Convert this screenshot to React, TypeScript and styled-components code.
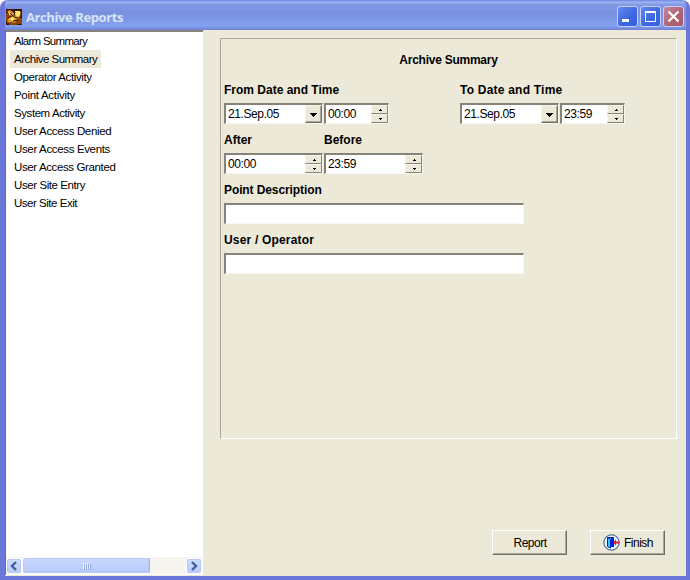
import React from "react";
import styled, { createGlobalStyle } from "styled-components";

const GlobalStyle = createGlobalStyle`
  * { box-sizing: border-box; }
  body { margin: 0; overflow: hidden; background: #fff; }
  input, button { font: inherit; color: inherit; }
`;

const Window = styled.div`
  width: 690px;
  height: 580px;
  display: flex;
  flex-direction: column;
  background: #ece9d8;
  border: solid #6b78d9;
  border-width: 0 4px 4px 5px;
  border-radius: 8px 8px 0 0;
  overflow: hidden;
  font: 12px/18px "Liberation Sans", Arial, sans-serif;
  color: #000;
`;

const TitleBar = styled.header`
  height: 30px;
  flex: none;
  margin: 0 -4px 0 -5px;
  padding: 3px 6px 0 6px;
  display: flex;
  align-items: center;
  gap: 4px;
  background: linear-gradient(#6d83dc 0, #9db2f3 2px, #8097e4 5px, #7891df 13px, #7d98e7 20px, #83a1f0 26px, #7890e0 28px, #6f80d1 30px);
`;

const Title = styled.h1`
  margin: 0;
  flex: 1;
  font: bold 13px/20px "Open Sans", "Noto Sans", sans-serif;
  letter-spacing: -0.4px;
  color: #d8e4f8;
`;

const WindowControls = styled.div`
  display: flex;
  gap: 2px;
`;

const ControlButton = styled.button<{ $close?: boolean }>`
  width: 21px;
  height: 21px;
  padding: 0;
  border: 1px solid #c4d0fa;
  border-radius: 3px;
  background: ${(p) =>
    p.$close
      ? "linear-gradient(135deg, #c28a9e, #b0606f 60%, #a9596b)"
      : "linear-gradient(135deg, #6587ee, #3c66e0 60%, #3a64de)"};
  svg { display: block; }
`;

const Body = styled.main`
  flex: 1;
  display: flex;
  min-height: 0;
`;

const Sidebar = styled.nav`
  width: 198px;
  height: 545px;
  display: flex;
  flex-direction: column;
  background: #fff;
  border: solid #716f64;
  border-width: 2px 0 0 1px;
  border-top-color: #85837a;
`;

const ReportList = styled.ul`
  list-style: none;
  margin: 0;
  padding: 0 0 0 4px;
  flex: 1;
`;

const ReportItem = styled.li<{ $selected?: boolean; $spacing: number }>`
  width: max-content;
  height: 18px;
  padding: 0 4px;
  font-size: 11.5px;
  letter-spacing: ${(p) => p.$spacing}px;
  background: ${(p) => (p.$selected ? "#ece9d8" : "transparent")};
`;

const ScrollBar = styled.div`
  height: 17px;
  display: flex;
  align-items: center;
  background: #f4f3ee;
  margin: 0 1px 1px 0;
`;

const ScrollArrow = styled.button`
  width: 16px;
  height: 16px;
  padding: 0;
  border: 1px solid #fff;
  border-radius: 3px;
  background: linear-gradient(#d0dcff, #b9cafb);
  box-shadow: inset 0 0 0 1px #b6c7f3;
  svg { display: block; }
`;

const ScrollTrack = styled.div`
  flex: 1;
  height: 17px;
  background: #f5f4ef;
`;

const ScrollThumb = styled.div`
  width: 128px;
  height: 17px;
  display: flex;
  align-items: center;
  justify-content: center;
  gap: 1px;
  border: 1px solid #fff;
  border-right-color: #a3b6e6;
  border-radius: 3px;
  background: linear-gradient(#cbd8ff, #bdcefe 75%, #b1c4f6);
  box-shadow: inset 0 0 0 1px #b9c9f7;
`;

const Grip = styled.span`
  width: 1px;
  height: 6px;
  background: #eef3ff;
  box-shadow: 1px 1px 0 #93aae6;
`;

const Workspace = styled.section`
  width: 457px;
  margin: 8px 0 0 17px;
`;

const Panel = styled.div`
  height: 401px;
  padding: 12px 3px;
  border: 1px solid;
  border-color: #aca899 #fff #fff #aca899;
`;

const Heading = styled.h2`
  margin: 0 0 12px;
  font-size: 12px;
  line-height: 18px;
  text-align: center;
  letter-spacing: -0.25px;
`;

const FieldRow = styled.div`
  display: flex;
  height: 50px;
`;

const Field = styled.div<{ $width: number }>`
  width: ${(p) => p.$width}px;
`;

const Label = styled.label<{ $spacing?: number }>`
  display: block;
  height: 22px;
  line-height: 18px;
  font-weight: bold;
  white-space: nowrap;
  letter-spacing: ${(p) => p.$spacing ?? 0}px;
`;

const Controls = styled.div`
  display: flex;
  gap: 1px;
`;

const Sunken = styled.div<{ $width: number }>`
  width: ${(p) => p.$width}px;
  height: 21px;
  display: flex;
  background: #fff;
  border: solid;
  border-width: 2px 1px 1px 2px;
  border-color: #85837a #f8f7f2 #f8f7f2 #85837a;
`;

const Value = styled.input`
  flex: 1;
  min-width: 0;
  width: 0;
  height: 18px;
  padding: 0 0 0 2px;
  border: 0;
  outline: 0;
  background: transparent;
  letter-spacing: -0.4px;
`;

const DropButton = styled.button`
  width: 17px;
  height: 18px;
  padding: 0;
  border: 1px solid;
  border-color: #f6f4ea #716f64 #716f64 #f6f4ea;
  box-shadow: inset -1px -1px 0 #aca899;
  background: #ece9d8;
  svg { display: block; }
`;

const Spinner = styled.div`
  width: 17px;
  display: flex;
  flex-direction: column;
`;

const SpinButton = styled.button`
  height: 9px;
  padding: 0;
  border: 1px solid;
  border-color: #f6f4ea #85837a #85837a #f6f4ea;
  background: #ece9d8;
  svg { display: block; }
`;

const Actions = styled.footer`
  display: flex;
  justify-content: flex-end;
  gap: 23px;
  margin: 91px 12px 0 0;
`;

const PushButton = styled.button`
  width: 75px;
  height: 25px;
  padding: 0 0 0 1px;
  display: flex;
  align-items: center;
  justify-content: center;
  gap: 4px;
  border: 1px solid;
  border-color: #fff #716f64 #716f64 #fff;
  box-shadow: inset -1px -1px 0 #aca899;
  background: #ece9d8;
  letter-spacing: -0.5px;
`;

const reports: { name: string; spacing: number }[] = [
  { name: "Alarm Summary", spacing: -0.72 },
  { name: "Archive Summary", spacing: -0.5 },
  { name: "Operator Activity", spacing: -0.4 },
  { name: "Point Activity", spacing: -0.3 },
  { name: "System Activity", spacing: -0.43 },
  { name: "User Access Denied", spacing: -0.35 },
  { name: "User Access Events", spacing: -0.35 },
  { name: "User Access Granted", spacing: -0.38 },
  { name: "User Site Entry", spacing: -0.42 },
  { name: "User Site Exit", spacing: -0.48 },
];

const AppIcon = () => (
  <svg width="16" height="16" viewBox="0 0 16 16">
    <path fill="#3b1705" d="M0 0h16v16H0z" />
    <path fill="#8a4608" d="M0 4h4v8H0zM10 9h6v6h-6zM3 13h8v3H3z" />
    <path fill="#d99420" d="M1 2l3-1 3 2 2 3 3-4 3 1-1 5-3 2-2 4-4-1-4 1 1-4 3-3z" />
    <path fill="#ffe47a" d="M9 2h5v4l-3 2-2-3zM2 3l3 1-1 3zM3 10l4-2 2 2-3 2z" />
    <path stroke="#3b1705" fill="none" d="M4 4l4 4 4 1M2 9l4-2M9 3l-1 4M7 12l5-1" />
  </svg>
);

const Arrow = ({ left }: { left?: boolean }) => (
  <svg width="14" height="14" viewBox="0 0 14 14">
    <path d={left ? "M9 3L5 7l4 4" : "M5 3l4 4-4 4"} fill="none" stroke="#43629c" strokeWidth="2.4" />
  </svg>
);

const ExitIcon = () => (
  <svg width="17" height="17" viewBox="0 0 17 17">
    <circle cx="8.5" cy="8.5" r="7.7" fill="#e8f4ff" stroke="#244a80" />
    <path d="M5 3.5h5.5V13" fill="none" stroke="#0018a8" />
    <path d="M4.5 3.5l3 1.5v9l-3-1.5z" fill="#35c5f5" stroke="#0020c8" />
    <path d="M8 4h2v9H8z" fill="#0028e0" />
    <path d="M10 8.5l3-3v2h3v2h-3v2z" fill="#e81525" />
  </svg>
);

const TimeField = ({ value, width }: { value: string; width: number }) => (
  <Sunken $width={width}>
    <Value defaultValue={value} />
    <Spinner>
      <SpinButton aria-label="Increase">
        <svg width="15" height="7"><path d="M8 3h1v1h1v1H7V4h1z" /></svg>
      </SpinButton>
      <SpinButton aria-label="Decrease">
        <svg width="15" height="7"><path d="M7 3h3v1H9v1H8V4H7z" /></svg>
      </SpinButton>
    </Spinner>
  </Sunken>
);

const DateField = ({ value }: { value: string }) => (
  <Sunken $width={99}>
    <Value defaultValue={value} />
    <DropButton aria-label="Open calendar">
      <svg width="15" height="16"><path d="M4 7h7v1h-1v1H9v1H8v1H7v-1H6V9H5V8H4z" /></svg>
    </DropButton>
  </Sunken>
);

export default function App() {
  return (
    <>
      <GlobalStyle />
      <Window>
        <TitleBar>
          <AppIcon />
          <Title>Archive Reports</Title>
          <WindowControls>
            <ControlButton aria-label="Minimize">
              <svg width="19" height="19"><path fill="#fff" d="M4 12h7v3H4z" /></svg>
            </ControlButton>
            <ControlButton aria-label="Maximize">
              <svg width="19" height="19"><path fill="#fff" fillRule="evenodd" d="M4 4h11v11H4zM5 6v8h9V6z" /></svg>
            </ControlButton>
            <ControlButton $close aria-label="Close">
              <svg width="19" height="19"><path stroke="#fff" strokeWidth="2.2" d="M4.5 4.5l10 10M14.5 4.5l-10 10" /></svg>
            </ControlButton>
          </WindowControls>
        </TitleBar>
        <Body>
          <Sidebar>
            <ReportList>
              {reports.map((r) => (
                <ReportItem key={r.name} $selected={r.name === "Archive Summary"} $spacing={r.spacing}>
                  {r.name}
                </ReportItem>
              ))}
            </ReportList>
            <ScrollBar>
              <ScrollArrow aria-label="Scroll left"><Arrow left /></ScrollArrow>
              <ScrollTrack>
                <ScrollThumb><Grip /><Grip /><Grip /><Grip /></ScrollThumb>
              </ScrollTrack>
              <ScrollArrow aria-label="Scroll right"><Arrow /></ScrollArrow>
            </ScrollBar>
          </Sidebar>
          <Workspace>
            <Panel>
              <Heading>Archive Summary</Heading>
              <FieldRow>
                <Field $width={236}>
                  <Label>From Date and Time</Label>
                  <Controls>
                    <DateField value="21.Sep.05" />
                    <TimeField value="00:00" width={65} />
                  </Controls>
                </Field>
                <Field $width={170}>
                  <Label $spacing={0.22}>To Date and Time</Label>
                  <Controls>
                    <DateField value="21.Sep.05" />
                    <TimeField value="23:59" width={65} />
                  </Controls>
                </Field>
              </FieldRow>
              <FieldRow>
                <Field $width={100}>
                  <Label>After</Label>
                  <TimeField value="00:00" width={99} />
                </Field>
                <Field $width={100}>
                  <Label>Before</Label>
                  <TimeField value="23:59" width={99} />
                </Field>
              </FieldRow>
              <FieldRow>
                <Field $width={300}>
                  <Label $spacing={-0.1}>Point Description</Label>
                  <Sunken $width={300}><Value aria-label="Point Description" /></Sunken>
                </Field>
              </FieldRow>
              <FieldRow>
                <Field $width={300}>
                  <Label $spacing={0.18}>User / Operator</Label>
                  <Sunken $width={300}><Value aria-label="User / Operator" /></Sunken>
                </Field>
              </FieldRow>
            </Panel>
            <Actions>
              <PushButton>Report</PushButton>
              <PushButton><ExitIcon />Finish</PushButton>
            </Actions>
          </Workspace>
        </Body>
      </Window>
    </>
  );
}
